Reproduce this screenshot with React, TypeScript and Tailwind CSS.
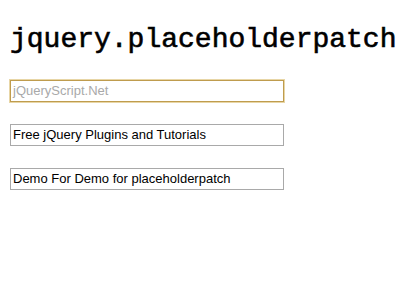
export default function App() {
  const fields = [
    { value: "", placeholder: "jQueryScript.Net", focused: true },
    { value: "Free jQuery Plugins and Tutorials", placeholder: "", focused: false },
    { value: "Demo For Demo for placeholderpatch", placeholder: "", focused: false },
  ];

  return (
    <div className="w-[401px] h-[298px] bg-white px-[10px] pt-[22px]">
      <h1 className="font-['Liberation_Mono',monospace] text-[28px] font-normal [-webkit-text-stroke:0.6px_black] leading-[36px] text-black">
        jquery.placeholderpatch
      </h1>
      <div className="flex flex-col gap-[22px] mt-[22px]">
        {fields.map((f, i) => (
          <div
            key={i}
            className={
              f.focused
                ? "w-[274px] h-[22px] border border-[#bf9c4e] shadow-[0_0_0_1px_#e8d6a6] flex items-center px-[2px]"
                : "w-[274px] h-[22px] border border-[#a9a9a9] flex items-center px-[2px]"
            }
          >
            <span
              className={
                f.value
                  ? "font-['Liberation_Sans',Arial,sans-serif] text-[13px] text-black whitespace-nowrap"
                  : "font-['Liberation_Sans',Arial,sans-serif] text-[13px] text-[#a9a9a9] whitespace-nowrap"
              }
            >
              {f.value || f.placeholder}
            </span>
          </div>
        ))}
      </div>
    </div>
  );
}
